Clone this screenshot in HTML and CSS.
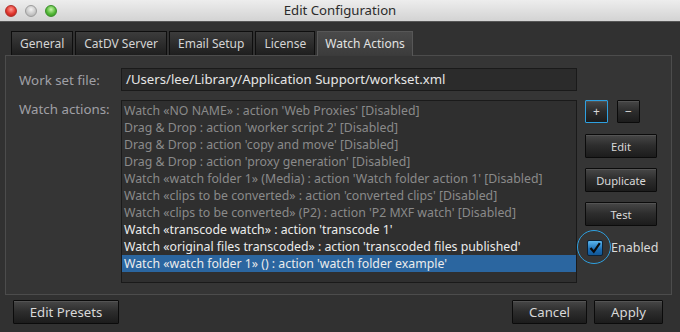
FILE: index.html
```html
<!DOCTYPE html>
<html lang="en">
<head>
  <meta charset="UTF-8" />
  <title>Edit Configuration</title>
  <link rel="stylesheet" href="styles.css">
</head>
<body>
  <!-- Title bar -->
  <div class="titlebar">
    <div class="lights">
      <span class="light red"></span>
      <span class="light grey"></span>
      <span class="light green"></span>
    </div>
    <div class="title">Edit Configuration</div>
    <div></div>
  </div>

  <div class="content">
    <!-- Tabs -->
    <div class="tabs">
      <div class="tab">General</div>
      <div class="tab">CatDV Server</div>
      <div class="tab">Email Setup</div>
      <div class="tab">License</div>
      <div class="tab active">Watch Actions</div>
    </div>

    <!-- Tab panel -->
    <div class="panel">
      <div class="field-row">
        <div class="label">Work set file:</div>
        <div class="input">/Users/lee/Library/Application Support/workset.xml</div>
      </div>

      <div class="actions-row">
        <div class="label top">Watch actions:</div>
        <ul class="list">
          <li>Watch «NO NAME» : action 'Web Proxies' [Disabled]</li>
          <li>Drag &amp; Drop : action 'worker script 2' [Disabled]</li>
          <li>Drag &amp; Drop : action 'copy and move' [Disabled]</li>
          <li>Drag &amp; Drop : action 'proxy generation' [Disabled]</li>
          <li>Watch «watch folder 1» (Media) : action 'Watch folder action 1' [Disabled]</li>
          <li>Watch «clips to be converted» : action 'converted clips' [Disabled]</li>
          <li>Watch «clips to be converted» (P2) : action 'P2 MXF watch' [Disabled]</li>
          <li class="enabled">Watch «transcode watch» : action 'transcode 1'</li>
          <li class="enabled">Watch «original files transcoded» : action 'transcoded files published'</li>
          <li class="enabled selected">Watch «watch folder 1» () : action 'watch folder example'</li>
        </ul>

        <div class="side">
          <div class="pm">
            <button class="btn small focus">+</button>
            <button class="btn small">&minus;</button>
          </div>
          <button class="btn side-btn first">Edit</button>
          <button class="btn side-btn">Duplicate</button>
          <button class="btn side-btn">Test</button>
          <label class="check">
            <span class="box">
              <span class="ring"></span>
              <svg width="14" height="14" viewBox="0 0 14 14">
                <path d="M2.5 7 L5.8 10.8 L11.8 2.2" fill="none" stroke="#0a0a0a" stroke-width="2.2" stroke-linejoin="miter"/>
              </svg>
            </span>
            Enabled
          </label>
        </div>
      </div>
    </div>

    <!-- Footer -->
    <div class="footer">
      <button class="btn presets">Edit Presets</button>
      <div class="spacer"></div>
      <button class="btn cancel">Cancel</button>
      <button class="btn apply">Apply</button>
    </div>
  </div>
</body>
</html>
```
FILE: styles.css
```css
:root {
  --bg: #313131;
  --panel-bg: #353535;
  --field-bg: #2b2b2b;
  --text: #dedede;
  --muted: #8a8a8a;
  --label: #a0a0a6;
  --select: #2b66a0;
  --focus: #2ea0e0;
}

body {
  margin: 0;
  width: 680px;
  height: 332px;
  overflow: hidden;
  background: var(--bg);
  color: var(--text);
  font-family: "Noto Sans", "DejaVu Sans", sans-serif;
  font-size: 13px;
}

/* Title bar */
.titlebar {
  height: 21px;
  display: grid;
  grid-template-columns: 1fr auto 1fr;
  align-items: center;
  background: linear-gradient(#ededed, #d3d3d3);
  border-bottom: 1px solid #555;
}

.lights {
  display: flex;
  gap: 8px;
  padding-left: 5px;
}

.light {
  width: 12px;
  height: 12px;
  border-radius: 50%;
  box-sizing: border-box;
}

.light.red {
  background: radial-gradient(circle at 50% 35%, #ff9a92, #e0352c 55%, #a81e18);
  border: 1px solid #b0302a;
}

.light.grey {
  background: radial-gradient(circle at 50% 35%, #f4f4f4, #c9c9c9 55%, #a6a6a6);
  border: 1px solid #9d9d9d;
}

.light.green {
  background: radial-gradient(circle at 50% 35%, #c6f5a8, #54b838 55%, #2f8a1c);
  border: 1px solid #3a8e2a;
}

.title {
  font-size: 13.2px;
  line-height: 21px;
  color: #2b2b2b;
}

/* Main area */
.content {
  padding: 9px 8px 0 5px;
}

.tabs {
  display: flex;
  gap: 2px;
  margin-left: 6px;
  height: 24px;
  font-size: 12px;
}

.tab {
  padding: 0 8px;
  line-height: 23px;
  border: 1px solid #0e0e0e;
  border-bottom: none;
  background: linear-gradient(#3c3c3c, #1e1e1e);
  color: #d4d4d4;
}

.tab.active {
  padding: 0 7px;
  background: linear-gradient(#4a4a4a, #3b3b3b);
  border-color: #575757;
  margin-bottom: -1px;
  position: relative;
  z-index: 1;
  color: #e2e2e2;
}

.panel {
  border: 1px solid #4c4c4c;
  background: var(--panel-bg);
  padding: 12px 13px 11px 13px;
}

.field-row {
  display: flex;
  align-items: center;
}

.label {
  width: 102px;
  color: var(--label);
  flex-shrink: 0;
  font-size: 13.3px;
}

.label.top {
  line-height: 17px;
  padding-top: 1px;
}

.input {
  width: 456px;
  height: 23px;
  box-sizing: border-box;
  border: 1px solid #1a1a1a;
  background: var(--field-bg);
  padding-left: 4px;
  line-height: 21px;
  color: #e6e6e6;
  font-size: 13.2px;
}

.actions-row {
  display: flex;
  align-items: flex-start;
  margin-top: 9px;
}

.list {
  list-style: none;
  margin: 0;
  width: 456px;
  height: 183px;
  box-sizing: border-box;
  border: 1px solid #1a1a1a;
  background: #2f2f2f;
  padding: 1px 0 0 0;
  font-size: 12.3px;
}

.list li {
  height: 17px;
  line-height: 17px;
  padding-left: 2px;
  color: var(--muted);
  white-space: nowrap;
  overflow: hidden;
}

.list li.enabled {
  color: #ececec;
}

.list li.selected {
  background: var(--select);
}

/* Buttons */
.btn {
  font-family: inherit;
  font-size: 13.2px;
  color: #d8d8d8;
  border: 1px solid #0b0b0b;
  border-radius: 1px;
  background: linear-gradient(#474747, #2c2c2c 50%, #1c1c1c);
  box-shadow: inset 0 1px 0 rgba(255, 255, 255, 0.08);
  height: 24px;
  padding: 0;
  cursor: pointer;
}

.side {
  margin-left: 8px;
  display: flex;
  flex-direction: column;
  width: 72px;
}

.pm {
  display: flex;
  gap: 9px;
}

.btn.small {
  width: 23px;
  height: 23px;
  line-height: 20px;
  font-size: 12px;
}

.btn.focus {
  border-color: var(--focus);
}

.side-btn {
  width: 72px;
  margin-top: 10px;
  font-size: 11.2px;
}

.side-btn.first {
  margin-top: 11px;
}

.check {
  display: flex;
  align-items: center;
  margin-top: 13px;
  padding-left: 2px;
  gap: 8px;
  color: #dadada;
  font-size: 12.5px;
}

.box {
  position: relative;
  width: 16px;
  height: 16px;
  box-sizing: border-box;
  border: 1px solid #0c2236;
  border-radius: 2px;
  background: linear-gradient(#5bb6ee, #1a6db4 60%, #125796);
  display: flex;
  align-items: center;
  justify-content: center;
}

.ring {
  position: absolute;
  left: -11px;
  top: -11px;
  width: 32px;
  height: 32px;
  border: 1.5px solid var(--focus);
  border-radius: 50%;
}

/* Footer */
.footer {
  display: flex;
  margin-top: 5px;
  padding: 0 9px 0 8px;
}

.spacer {
  flex: 1;
}

.btn.presets {
  width: 106px;
}

.btn.cancel {
  width: 75px;
}

.btn.apply {
  width: 69px;
  margin-left: 7px;
}
```
